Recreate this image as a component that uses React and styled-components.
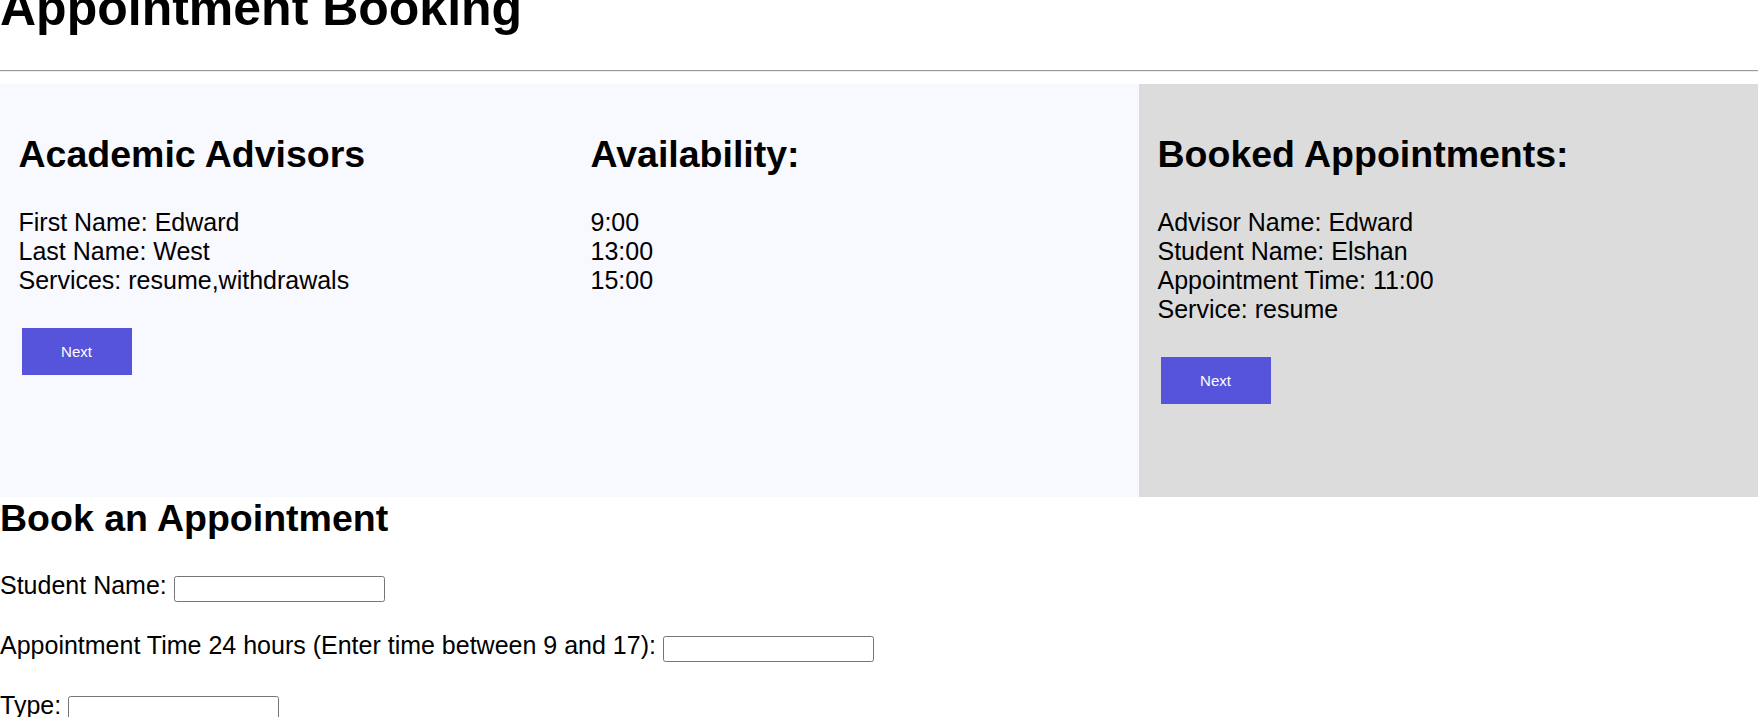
import styled, { createGlobalStyle } from "styled-components"

const GlobalStyle = createGlobalStyle`
html, body {
  margin: 0;
  padding: 0;
  background: #ffffff;
}
body {
  font-family: "Liberation Sans", Arial, sans-serif;
  font-size: 25px;
  color: #000000;
  overflow: hidden;
}
`

const Page = styled.div`
width: 100%;
`

const Title = styled.h1`
font-size: 50px;
font-weight: bold;
line-height: normal;
margin: -21.5px 0 0;
white-space: nowrap;
`

const Divider = styled.hr`
margin: 33px 0 12px;
border: none;
border-top: 1px solid #9a9a9a;
border-bottom: 1px solid #eeeeee;
height: 0;
`

const Board = styled.div`
display: grid;
grid-template-columns: 572px 567px 1fr;
height: 413px;
`

const Column = styled.section`
background-color: ${props => props.tone === "grey" ? "#dcdcdc" : "#f8f8ff"};
padding: 18px 18.5px;
`

const Heading = styled.h2`
font-size: 37.5px;
font-weight: bold;
line-height: normal;
margin: 31px 0 32px;
white-space: nowrap;
`

const Lines = styled.div`
line-height: normal;
`

const Line = styled.div`
white-space: nowrap;
`

const NextButton = styled.button`
display: block;
width: 110px;
height: 47px;
margin: 33px 0 0 3px;
border: none;
background-color: #5654da;
color: #ffffff;
font-family: "Liberation Sans", Arial, sans-serif;
font-size: 15px;
cursor: pointer;
`

const BookTitle = styled(Heading)`
margin: 0 0 31px;
`

const FormRow = styled.div`
margin: 0 0 29px;
white-space: nowrap;
line-height: normal;
`

const Field = styled.input`
box-sizing: border-box;
width: 211px;
height: 26px;
padding: 1px 2px;
border: 1px solid #767676;
border-radius: 2.5px;
font-family: "Liberation Sans", Arial, sans-serif;
font-size: 16px;
background: #ffffff;
vertical-align: baseline;
`

const advisor = {
  first: "Edward",
  last: "West",
  services: "resume,withdrawals",
  slots: ["9:00", "13:00", "15:00"],
}

const booking = {
  advisor: "Edward",
  student: "Elshan",
  time: "11:00",
  service: "resume",
}

const App = () => {
  return (
    <Page>
      <GlobalStyle />
      <Title>Appointment Booking</Title>
      <Divider />
      <Board>
        <Column>
          <Heading>Academic Advisors</Heading>
          <Lines>
            <Line>First Name: {advisor.first}</Line>
            <Line>Last Name: {advisor.last}</Line>
            <Line>Services: {advisor.services}</Line>
          </Lines>
          <NextButton>Next</NextButton>
        </Column>
        <Column>
          <Heading>Availability:</Heading>
          <Lines>
            {advisor.slots.map(slot => (
              <Line key={slot}>{slot}</Line>
            ))}
          </Lines>
        </Column>
        <Column tone="grey">
          <Heading>Booked Appointments:</Heading>
          <Lines>
            <Line>Advisor Name: {booking.advisor}</Line>
            <Line>Student Name: {booking.student}</Line>
            <Line>Appointment Time: {booking.time}</Line>
            <Line>Service: {booking.service}</Line>
          </Lines>
          <NextButton>Next</NextButton>
        </Column>
      </Board>
      <BookTitle>Book an Appointment</BookTitle>
      <FormRow>
        Student Name: <Field type="text" />
      </FormRow>
      <FormRow>
        Appointment Time 24 hours (Enter time between 9 and 17): <Field type="text" />
      </FormRow>
      <FormRow>
        Type: <Field type="text" />
      </FormRow>
    </Page>
  )
}

export default App
